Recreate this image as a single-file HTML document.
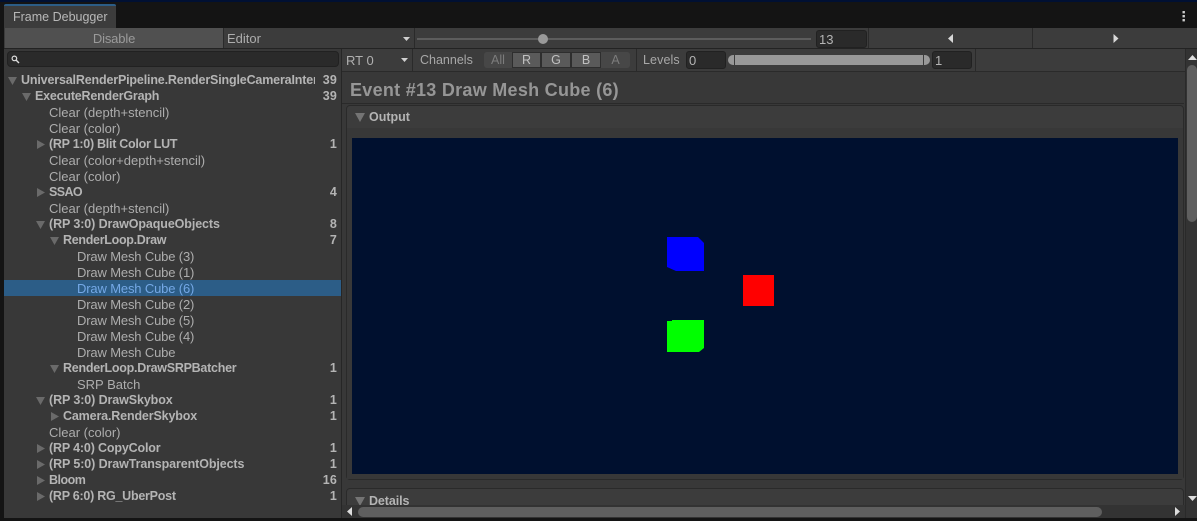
<!DOCTYPE html>
<html><head><meta charset="utf-8">
<style>
html,body{margin:0;padding:0;background:#141414}
body{width:1197px;height:521px;overflow:hidden;position:relative;font-family:"Liberation Sans",sans-serif;font-size:13px;color:#adadad}
div{position:absolute;box-sizing:border-box}
.t{white-space:nowrap;line-height:17px;letter-spacing:-.15px}
.b{font-weight:bold;font-size:12.5px;color:#b4b4b4;letter-spacing:-.1px}
.n{left:300px;width:37px;text-align:right;letter-spacing:.2px}
.fld{background:#2a2a2a;border:1px solid #212121;border-radius:3px;color:#b4b4b4;line-height:17px;padding-left:2px;font-size:13px}
.ch{top:52px;height:16px;text-align:center;line-height:16px;font-size:12.5px}
</style></head><body>
<div style="left:0;top:0;width:1197px;height:2px;background:#001033"></div>
<div style="left:4px;top:4px;width:112px;height:24px;background:#3c3c3c;border-top:2px solid #2c5d87;border-radius:2px 2px 0 0"></div>
<div class="t" style="left:13px;top:9px;color:#b8b8b8;font-size:12.5px;letter-spacing:0">Frame Debugger</div>
<svg style="position:absolute;left:1182px;top:11px" width="4" height="11"><rect x="0.5" y="0" width="2.4" height="2.4" fill="#ccc"/><rect x="0.5" y="4" width="2.4" height="2.4" fill="#ccc"/><rect x="0.5" y="8" width="2.4" height="2.4" fill="#ccc"/></svg>

<div style="left:4px;top:28px;width:1193px;height:490px;background:#383838"></div>
<!-- toolbar 1 -->
<div style="left:4px;top:28px;width:1193px;height:21px;background:#3c3c3c;border-bottom:1px solid #232323"></div>
<div style="left:5px;top:28px;width:219px;height:20px;background:#505050;border-right:1px solid #2a2a2a"></div>
<div class="t" style="left:5px;top:30px;width:218px;text-align:center;color:#9a9a9a">Disable</div>
<div class="t" style="left:227px;top:30px;color:#adadad;letter-spacing:0">Editor</div>
<svg style="position:absolute;left:403px;top:37px" width="7" height="4"><path d="M0 0H7L3.500 4Z" fill="#d0d0d0"/></svg>
<div style="left:414px;top:28px;width:1px;height:20px;background:#2a2a2a"></div>
<div style="left:417px;top:38px;width:394px;height:2px;background:#5d5d5d"></div>
<div style="left:538px;top:34px;width:10px;height:10px;border-radius:50%;background:#999"></div>
<div class="fld" style="left:816px;top:30px;width:51px;height:18px">13</div>
<div style="left:868px;top:28px;width:1px;height:20px;background:#2a2a2a"></div>
<div style="left:1032px;top:28px;width:1px;height:20px;background:#2a2a2a"></div>
<svg style="position:absolute;left:948px;top:34px" width="6" height="9"><path d="M5 0V9L0 4.5Z" fill="#d8d8d8"/></svg>
<svg style="position:absolute;left:1113px;top:34px" width="6" height="9"><path d="M0.500 0V9L5.500 4.500Z" fill="#d8d8d8"/></svg>

<!-- left panel -->
<div style="left:7px;top:51px;width:332px;height:16px;background:#2a2a2a;border:1px solid #212121;border-radius:4px"></div>
<svg style="position:absolute;left:11px;top:55px" width="9" height="9"><circle cx="3.400" cy="3.400" r="2.300" fill="none" stroke="#ddd" stroke-width="1.200"/><path d="M5 5L8 8" stroke="#ddd" stroke-width="1.400"/></svg>
<div style="left:341px;top:49px;width:1px;height:469px;background:#262626"></div>
<div style="left:4px;top:280px;width:337px;height:16px;background:#2c5d87"></div>

<div class="t b" style="left:21px;top:72px;width:294px;overflow:hidden;letter-spacing:-.16px">UniversalRenderPipeline.RenderSingleCameraInternal</div><div class="t n b" style="top:72px">39</div>
<div class="t b" style="left:35px;top:88px;letter-spacing:-.2px">ExecuteRenderGraph</div><div class="t n b" style="top:88px">39</div>
<div class="t" style="left:49px;top:104px;letter-spacing:0">Clear (depth+stencil)</div>
<div class="t" style="left:49px;top:120px;letter-spacing:0">Clear (color)</div>
<div class="t b" style="left:49px;top:136px;letter-spacing:-.27px">(RP 1:0) Blit Color LUT</div><div class="t n b" style="top:136px">1</div>
<div class="t" style="left:49px;top:152px;letter-spacing:0">Clear (color+depth+stencil)</div>
<div class="t" style="left:49px;top:168px;letter-spacing:0">Clear (color)</div>
<div class="t b" style="left:49px;top:184px;letter-spacing:-.6px">SSAO</div><div class="t n b" style="top:184px">4</div>
<div class="t" style="left:49px;top:200px;letter-spacing:0">Clear (depth+stencil)</div>
<div class="t b" style="left:49px;top:216px">(RP 3:0) DrawOpaqueObjects</div><div class="t n b" style="top:216px">8</div>
<div class="t b" style="left:63px;top:232px;letter-spacing:-.3px">RenderLoop.Draw</div><div class="t n b" style="top:232px">7</div>
<div class="t" style="left:77px;top:248px">Draw Mesh Cube (3)</div>
<div class="t" style="left:77px;top:264px">Draw Mesh Cube (1)</div>
<div class="t" style="left:77px;top:280px;color:#74a8e6">Draw Mesh Cube (6)</div>
<div class="t" style="left:77px;top:296px">Draw Mesh Cube (2)</div>
<div class="t" style="left:77px;top:312px">Draw Mesh Cube (5)</div>
<div class="t" style="left:77px;top:328px">Draw Mesh Cube (4)</div>
<div class="t" style="left:77px;top:344px">Draw Mesh Cube</div>
<div class="t b" style="left:63px;top:360px;letter-spacing:-.26px">RenderLoop.DrawSRPBatcher</div><div class="t n b" style="top:360px">1</div>
<div class="t" style="left:77px;top:376px;letter-spacing:0">SRP Batch</div>
<div class="t b" style="left:49px;top:392px">(RP 3:0) DrawSkybox</div><div class="t n b" style="top:392px">1</div>
<div class="t b" style="left:63px;top:408px;letter-spacing:-.15px">Camera.RenderSkybox</div><div class="t n b" style="top:408px">1</div>
<div class="t" style="left:49px;top:424px;letter-spacing:0">Clear (color)</div>
<div class="t b" style="left:49px;top:440px;letter-spacing:-.16px">(RP 4:0) CopyColor</div><div class="t n b" style="top:440px">1</div>
<div class="t b" style="left:49px;top:456px">(RP 5:0) DrawTransparentObjects</div><div class="t n b" style="top:456px">1</div>
<div class="t b" style="left:49px;top:472px;letter-spacing:-.5px">Bloom</div><div class="t n b" style="top:472px">16</div>
<div class="t b" style="left:49px;top:488px;letter-spacing:-.25px">(RP 6:0) RG_UberPost</div><div class="t n b" style="top:488px">1</div>

<svg style="position:absolute;left:0;top:0" width="342" height="521" fill="#6a6a6a">
<path d="M8 77H17L12.500 85Z"/><path d="M22 93H31L26.500 101Z"/>
<path d="M37 140V149L45 144.500Z"/><path d="M37 188V197L45 192.500Z"/>
<path d="M36 221H45L40.500 229Z"/><path d="M50 237H59L54.500 245Z"/><path d="M50 365H59L54.500 373Z"/>
<path d="M36 397H45L40.500 405Z"/><path d="M51 412V421L59 416.500Z"/>
<path d="M37 444V453L45 448.500Z"/><path d="M37 460V469L45 464.500Z"/><path d="M37 476V485L45 480.500Z"/><path d="M37 492V501L45 496.500Z"/>
</svg>

<!-- toolbar 2 -->
<div style="left:342px;top:49px;width:855px;height:23px;background:#3c3c3c;border-bottom:1px solid #2a2a2a"></div>
<div class="t" style="left:346px;top:52px;color:#b0b0b0;letter-spacing:0">RT 0</div>
<svg style="position:absolute;left:401px;top:58px" width="7" height="4"><path d="M0 0H7L3.500 4Z" fill="#d0d0d0"/></svg>
<div style="left:412px;top:49px;width:1px;height:22px;background:#2a2a2a"></div>
<div class="t" style="left:420px;top:52px;color:#a8a8a8;font-size:12.5px;letter-spacing:0">Channels</div>
<div class="ch" style="left:484px;width:28px;background:#474747;color:#7c7c7c;border-radius:3px 0 0 3px">All</div>
<div class="ch" style="left:512px;width:29px;background:#5a5a5a;color:#c0c0c0;border:1px solid #2e2e2e;line-height:14px">R</div>
<div class="ch" style="left:541px;width:30px;background:#5a5a5a;color:#c0c0c0;border:1px solid #2e2e2e;line-height:14px">G</div>
<div class="ch" style="left:571px;width:30px;background:#5a5a5a;color:#c0c0c0;border:1px solid #2e2e2e;line-height:14px">B</div>
<div class="ch" style="left:601px;width:29px;background:#474747;color:#7c7c7c;border-radius:0 3px 3px 0">A</div>
<div style="left:636px;top:49px;width:1px;height:22px;background:#2a2a2a"></div>
<div class="t" style="left:643px;top:52px;color:#a8a8a8;font-size:12.5px;letter-spacing:.1px">Levels</div>
<div class="fld" style="left:686px;top:51px;width:40px;height:18px">0</div>
<div style="left:728px;top:55px;width:6px;height:10px;background:#999;border-radius:5px 0 0 5px"></div>
<div style="left:735px;top:55px;width:188px;height:10px;background:#999"></div>
<div style="left:924px;top:55px;width:6px;height:10px;background:#999;border-radius:0 5px 5px 0"></div>
<div class="fld" style="left:932px;top:51px;width:40px;height:18px">1</div>
<div style="left:975px;top:49px;width:1px;height:22px;background:#2a2a2a"></div>

<!-- right content -->
<div class="t" style="left:350px;top:80px;font-size:18px;line-height:21px;font-weight:bold;color:#969696;letter-spacing:.28px">Event #13 Draw Mesh Cube (6)</div>
<div style="left:342px;top:103px;width:842px;height:1px;background:#2a2a2a"></div>
<div style="left:346px;top:105px;width:838px;height:375px;background:#3c3c3c;border:1px solid #2a2a2a;border-radius:4px"></div>
<div style="left:347px;top:128px;width:836px;height:351px;background:#383838"></div>
<svg style="position:absolute;left:355px;top:113px" width="10" height="9"><path d="M0 0H10L5 9Z" fill="#747474"/></svg>
<div class="t b" style="left:369px;top:109px;letter-spacing:0">Output</div>
<div style="left:352px;top:138px;width:826px;height:336px;background:#00102f"></div>
<svg style="position:absolute;left:660px;top:230px" width="120" height="130">
<path d="M7 7H38L44 13V41H16L7 37Z" fill="#0000ff"/>
<path d="M83 45H114V76H83Z" fill="#ff0000"/>
<path d="M7 91H12V90H44V118L39 122H7Z" fill="#00ff00"/>
</svg>
<div style="left:346px;top:488px;width:838px;height:30px;background:#3c3c3c;border:1px solid #2a2a2a;border-radius:4px 4px 0 0"></div>
<svg style="position:absolute;left:355px;top:497px" width="10" height="9"><path d="M0 0H10L5 9Z" fill="#747474"/></svg>
<div class="t b" style="left:369px;top:493px">Details</div>

<!-- v scrollbar -->
<div style="left:1185px;top:49px;width:12px;height:469px;background:#333;border-left:1px solid #2a2a2a"></div>
<div style="left:1187px;top:65px;width:10px;height:157px;background:#5f5f5f;border-radius:5px"></div>
<svg style="position:absolute;left:1188px;top:55px" width="9" height="5"><path d="M4.500 0L9 5H0Z" fill="#ddd"/></svg>
<svg style="position:absolute;left:1188px;top:496px" width="9" height="5"><path d="M0 0H9L4.500 5Z" fill="#ddd"/></svg>
<!-- h scrollbar -->
<div style="left:342px;top:505px;width:843px;height:13px;background:#333"></div>
<div style="left:358px;top:507px;width:744px;height:10px;background:#5f5f5f;border-radius:5px"></div>
<svg style="position:absolute;left:347px;top:507px" width="6" height="9"><path d="M5 0V9L0 4.500Z" fill="#ddd"/></svg>
<svg style="position:absolute;left:1175px;top:507px" width="6" height="9"><path d="M0 0V9L5 4.500Z" fill="#ddd"/></svg>
<div style="left:0;top:518px;width:1197px;height:3px;background:#141414"></div>
</body></html>
